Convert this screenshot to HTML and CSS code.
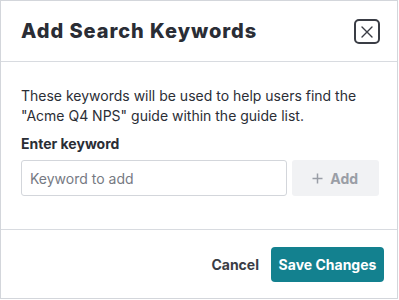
FILE: index.html
```html
<!DOCTYPE html>
<html>
<head>
<meta charset="utf-8">
<link rel="stylesheet" href="styles.css">
</head>
<body>
<div class="modal">
  <div class="modal-header">
    <h2 class="modal-title">Add Search Keywords</h2>
    <button class="close-btn" aria-label="Close">
      <svg width="14" height="14" viewBox="0 0 14 14"><path d="M2 2 L12 12 M12 2 L2 12" stroke="#3a3d45" stroke-width="1.4" stroke-linecap="round" fill="none"/></svg>
    </button>
  </div>
  <div class="modal-body">
    <p class="desc">These keywords will be used to help users find the "Acme Q4 NPS" guide within the guide list.</p>
    <label class="field-label">Enter keyword</label>
    <div class="input-row">
      <input class="kw-input" type="text" placeholder="Keyword to add">
      <button class="add-btn">
        <svg width="11" height="11" viewBox="0 0 11 11"><path d="M5.5 0.5 V10.5 M0.5 5.5 H10.5" stroke="#9a9ea6" stroke-width="1.5" fill="none"/></svg>
        <span>Add</span>
      </button>
    </div>
  </div>
  <div class="modal-footer">
    <button class="cancel-btn">Cancel</button>
    <button class="save-btn">Save Changes</button>
  </div>
</div>
</body>
</html>
```

FILE: styles.css
```css
* { box-sizing: border-box; }
html, body { margin: 0; padding: 0; background: #fff; }
body { font-family: Inter, "Noto Sans", sans-serif; color: #2b2e36; }

.modal {
  width: 398px;
  height: 299px;
  border: 1px solid #d3d6db;
  display: flex;
  flex-direction: column;
  background: #fff;
}

.modal-header {
  height: 61px;
  border-bottom: 1px solid #d8dbe0;
  display: flex;
  align-items: center;
  justify-content: space-between;
  padding: 0 17px 0 20px;
}
.modal-title {
  margin: 0;
  font-size: 20px;
  font-weight: 800;
  color: #2a2d35;
  letter-spacing: 0.95px;
}
.close-btn {
  width: 26px;
  height: 25px;
  border: 2px solid #3a3d45;
  border-radius: 5px;
  background: #fff;
  padding: 0;
  display: flex;
  align-items: center;
  justify-content: center;
  margin-top: 1px;
}

.modal-body {
  padding: 24px 18px 0 20px;
  height: 168px;
  border-bottom: 1px solid #d8dbe0;
}
.desc {
  margin: 0;
  font-size: 14px;
  line-height: 20px;
  color: #2b2e36;
}
.field-label {
  display: block;
  margin-top: 8px;
  font-size: 14px;
  line-height: 20px;
  font-weight: 700;
  color: #2a2d35;
}
.input-row {
  display: flex;
  gap: 5px;
  margin-top: 6px;
}
.kw-input {
  width: 267px;
  height: 36px;
  border: 1px solid #d3d6db;
  border-radius: 3px;
  padding: 0 8px;
  font-family: Inter, "Noto Sans", sans-serif;
  font-size: 14px;
  color: #2b2e36;
  outline: none;
}
.kw-input::placeholder { color: #767a83; }
.add-btn {
  width: 88px;
  height: 36px;
  border: none;
  border-radius: 3px;
  background: #f1f2f4;
  color: #9a9ea6;
  font-family: Inter, "Noto Sans", sans-serif;
  font-size: 14px;
  font-weight: 700;
  display: flex;
  align-items: center;
  justify-content: center;
  gap: 7px;
  padding: 0;
}

.modal-footer {
  flex: 1;
  display: flex;
  align-items: center;
  justify-content: flex-end;
  padding: 0 13px 0 20px;
}
.cancel-btn {
  background: none;
  border: none;
  padding: 0 12px;
  height: 35px;
  font-family: Inter, "Noto Sans", sans-serif;
  font-size: 14px;
  font-weight: 700;
  color: #3a3d45;
}
.save-btn {
  height: 35px;
  width: 113px;
  border: none;
  border-radius: 4px;
  background: #13818f;
  color: #fff;
  font-family: Inter, "Noto Sans", sans-serif;
  font-size: 14px;
  font-weight: 700;
  padding: 0;
}
```
